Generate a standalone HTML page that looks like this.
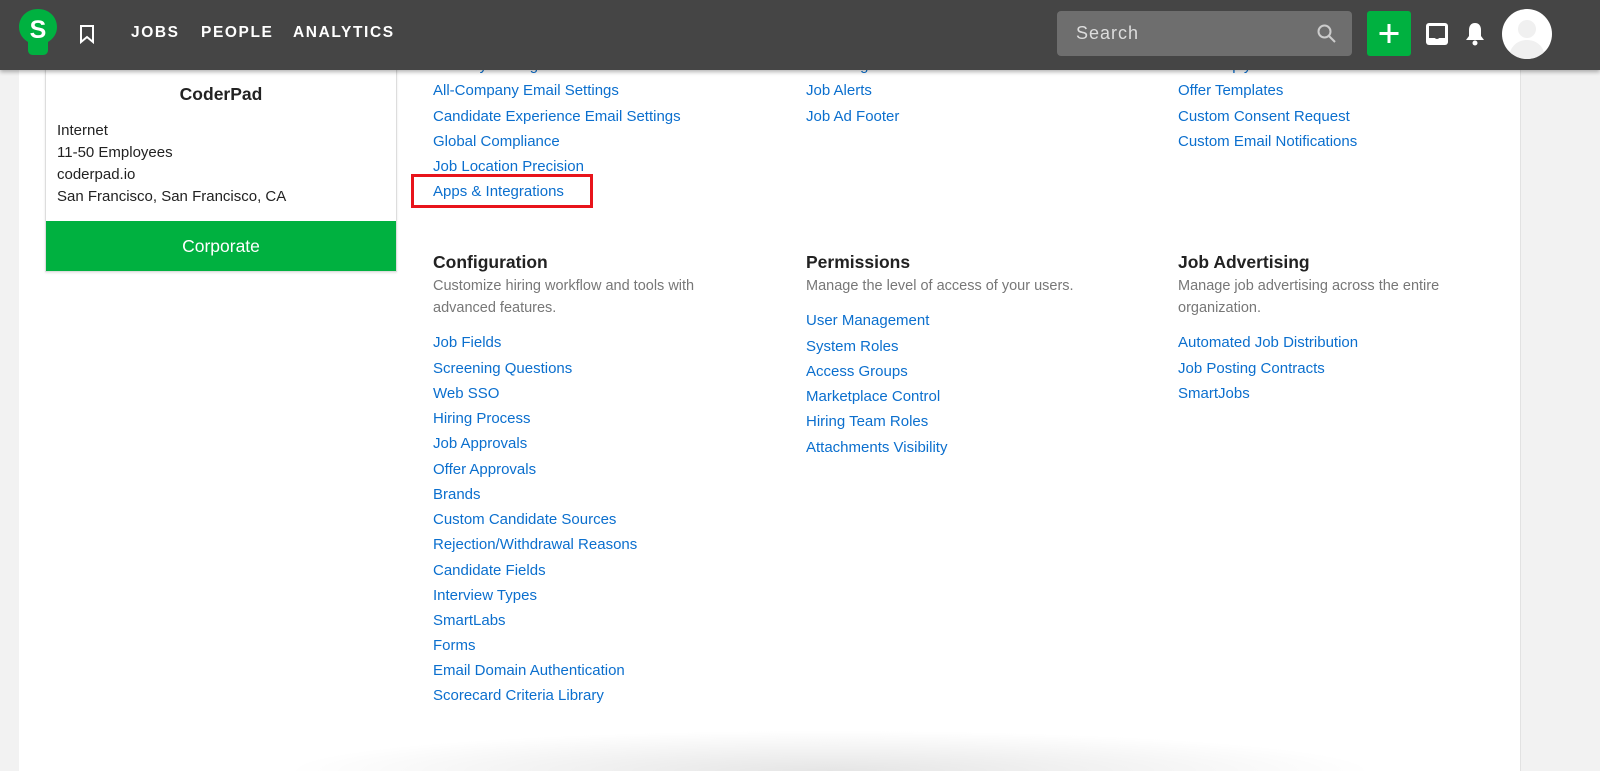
<!DOCTYPE html>
<html><head><style>
body{margin:0;width:1600px;height:771px;overflow:hidden;background:#f2f2f2;font-family:"Liberation Sans",sans-serif;position:relative}
.main{position:absolute;left:19px;top:0;width:1501px;height:771px;background:#fff;border-right:1px solid #e2e2e2}
.nav{position:absolute;left:0;top:0;width:1600px;height:70px;background:#454545;box-shadow:0 2px 4px rgba(0,0,0,.3);z-index:5}
.nav .t{position:absolute;top:24px;color:#fff;font-weight:bold;font-size:15.5px;letter-spacing:1.6px}
.l{position:absolute;color:#0b6fce;font-size:15px;white-space:nowrap}
.h{position:absolute;font-size:17.5px;color:#222;font-weight:bold}
.d{position:absolute;font-size:14.5px;color:#777;line-height:22px}
.card{position:absolute;left:45px;top:50px;width:350px;height:220px;border:1px solid #ddd;background:#fff;box-shadow:0 1px 2px rgba(0,0,0,.1)}
.card .i{position:absolute;left:11px;font-size:15px;color:#222}
</style></head><body>
<div class="main"></div>
<div class="nav">
<svg style="position:absolute;left:18px;top:8px" width="40" height="50" viewBox="0 0 40 50"><path d="M20 1C9 1 1 9 1 19c0 7 4 12 9 15v8c0 3 2 5 5 5h10c3 0 5-2 5-5v-8c5-3 9-8 9-15C39 9 31 1 20 1z" fill="#00b140"/><text x="20" y="30" fill="#fff" font-family="Liberation Sans" font-weight="bold" font-size="25" text-anchor="middle">S</text></svg>
<svg style="position:absolute;left:79px;top:24px" width="16" height="20" viewBox="0 0 16 20"><path d="M2 2h12v16l-6-5-6 5z" fill="none" stroke="#fff" stroke-width="2"/></svg>
<div class="t" style="left:131px">JOBS</div>
<div class="t" style="left:201px">PEOPLE</div>
<div class="t" style="left:293px">ANALYTICS</div>
<div style="position:absolute;left:1057px;top:11px;width:295px;height:45px;background:#6e6e6e;border-radius:4px"><span style="position:absolute;left:19px;top:12px;color:#ddd;font-size:18px;letter-spacing:1px">Search</span>
<svg style="position:absolute;right:16px;top:13px" width="19" height="19" viewBox="0 0 19 19"><circle cx="7.5" cy="7.5" r="6" fill="none" stroke="#ccc" stroke-width="2"/><path d="M12 12l6 6" stroke="#ccc" stroke-width="2"/></svg></div>
<div style="position:absolute;left:1367px;top:11px;width:44px;height:45px;background:#00b140;border-radius:3px"><svg width="44" height="45"><path d="M22 13v19M12.5 22.5h19" stroke="#fff" stroke-width="3"/></svg></div>
<svg style="position:absolute;left:1425px;top:22px" width="24" height="24" viewBox="0 0 24 24"><rect x="1" y="1" width="22" height="22" rx="3" fill="#fff"/><rect x="4" y="4" width="16" height="12" fill="#454545"/><path d="M4 14h5a3 3 0 006 0h5v2H4z" fill="#454545"/></svg>
<svg style="position:absolute;left:1464px;top:21px" width="22" height="26" viewBox="0 0 22 26"><path d="M11 2c-4 0-6 3-6 7v6l-3 4h18l-3-4V9c0-4-2-7-6-7z" fill="#fff"/><circle cx="11" cy="22" r="2.5" fill="#fff"/></svg>
<div style="position:absolute;left:1502px;top:9px;width:50px;height:50px;border-radius:50%;background:#fff;overflow:hidden"><svg width="50" height="50"><circle cx="25" cy="20" r="9" fill="#f0f0f0"/><path d="M7 50c0-12 8-19 18-19s18 7 18 19z" fill="#f0f0f0"/></svg></div>
</div>
<div class="card">
<div style="position:absolute;top:33px;width:100%;text-align:center;font-size:17.5px;font-weight:bold;color:#222">CoderPad</div>
<div class="i" style="top:71px">Internet</div>
<div class="i" style="top:93px">11-50 Employees</div>
<div class="i" style="top:115px">coderpad.io</div>
<div class="i" style="top:137px">San Francisco, San Francisco, CA</div>
<div style="position:absolute;left:0;top:170px;width:350px;height:50px;background:#00b140;color:#fff;font-size:17.5px;text-align:center;line-height:50px">Corporate</div>
</div>
<div class="l" style="left:433px;top:57px">Security Settings</div>
<div class="l" style="left:433px;top:82px">All-Company Email Settings</div>
<div class="l" style="left:433px;top:108px">Candidate Experience Email Settings</div>
<div class="l" style="left:433px;top:133px">Global Compliance</div>
<div class="l" style="left:433px;top:158px">Job Location Precision</div>
<div class="l" style="left:433px;top:183px">Apps &amp; Integrations</div>
<div style="position:absolute;left:411px;top:174px;width:176px;height:28px;border:3px solid #e8141b"></div>
<div class="l" style="left:806px;top:57px">Job Widget</div>
<div class="l" style="left:806px;top:82px">Job Alerts</div>
<div class="l" style="left:806px;top:108px">Job Ad Footer</div>
<div class="l" style="left:1178px;top:57px">Auto Reply</div>
<div class="l" style="left:1178px;top:82px">Offer Templates</div>
<div class="l" style="left:1178px;top:108px">Custom Consent Request</div>
<div class="l" style="left:1178px;top:133px">Custom Email Notifications</div>
<div class="h" style="left:433px;top:252px">Configuration</div>
<div class="d" style="left:433px;top:275px">Customize hiring workflow and tools with<br>advanced features.</div>
<div class="h" style="left:806px;top:252px">Permissions</div>
<div class="d" style="left:806px;top:275px">Manage the level of access of your users.</div>
<div class="h" style="left:1178px;top:252px">Job Advertising</div>
<div class="d" style="left:1178px;top:275px">Manage job advertising across the entire<br>organization.</div>
<div class="l" style="left:433px;top:334px">Job Fields</div>
<div class="l" style="left:433px;top:360px">Screening Questions</div>
<div class="l" style="left:433px;top:385px">Web SSO</div>
<div class="l" style="left:433px;top:410px">Hiring Process</div>
<div class="l" style="left:433px;top:435px">Job Approvals</div>
<div class="l" style="left:433px;top:461px">Offer Approvals</div>
<div class="l" style="left:433px;top:486px">Brands</div>
<div class="l" style="left:433px;top:511px">Custom Candidate Sources</div>
<div class="l" style="left:433px;top:536px">Rejection/Withdrawal Reasons</div>
<div class="l" style="left:433px;top:562px">Candidate Fields</div>
<div class="l" style="left:433px;top:587px">Interview Types</div>
<div class="l" style="left:433px;top:612px">SmartLabs</div>
<div class="l" style="left:433px;top:637px">Forms</div>
<div class="l" style="left:433px;top:662px">Email Domain Authentication</div>
<div class="l" style="left:433px;top:687px">Scorecard Criteria Library</div>
<div class="l" style="left:806px;top:312px">User Management</div>
<div class="l" style="left:806px;top:338px">System Roles</div>
<div class="l" style="left:806px;top:363px">Access Groups</div>
<div class="l" style="left:806px;top:388px">Marketplace Control</div>
<div class="l" style="left:806px;top:413px">Hiring Team Roles</div>
<div class="l" style="left:806px;top:439px">Attachments Visibility</div>
<div class="l" style="left:1178px;top:334px">Automated Job Distribution</div>
<div class="l" style="left:1178px;top:360px">Job Posting Contracts</div>
<div class="l" style="left:1178px;top:385px">SmartJobs</div>
<div style="position:absolute;left:280px;top:730px;width:1100px;height:41px;background:radial-gradient(ellipse at 50% 100%,rgba(0,0,0,.1),rgba(0,0,0,0) 70%)"></div>
</body></html>
